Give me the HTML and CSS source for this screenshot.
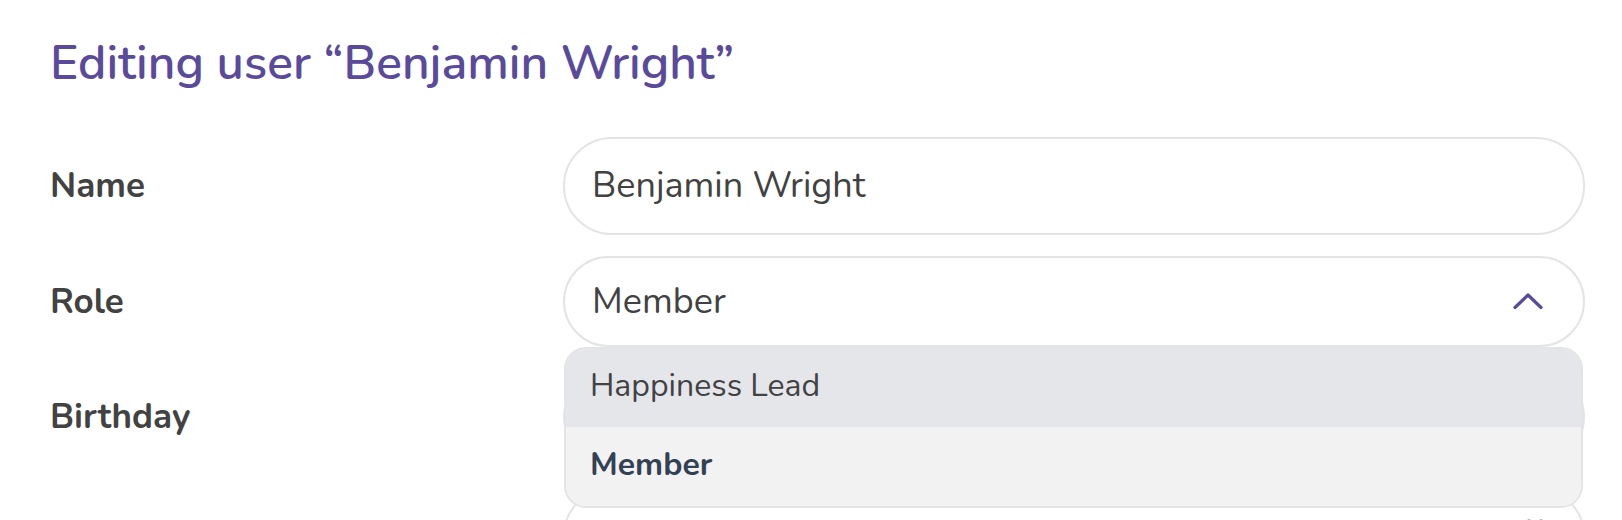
FILE: index.html
```html
<!DOCTYPE html>
<html lang="en">
<head>
<meta charset="utf-8">
<title>Editing user</title>
<link rel="stylesheet" href="styles.css">
</head>
<body>
<main class="page">
  <h1 class="title">Editing user “Benjamin Wright”</h1>
  <div class="form">
    <div class="row">
      <div class="label">Name</div>
      <div class="field">
        <div class="input">Benjamin Wright</div>
      </div>
    </div>
    <div class="row">
      <div class="label">Role</div>
      <div class="field">
        <div class="input select">
          <span>Member</span>
          <svg class="chevron" width="32" height="18" viewBox="0 0 32 18"><path d="M3 15.5 L16 3 L29 15.5" fill="none" stroke="#5a4a9c" stroke-width="3.2" stroke-linecap="round" stroke-linejoin="round"/></svg>
        </div>
        <ul class="menu">
          <li class="option option-hover">Happiness Lead</li>
          <li class="option option-selected">Member</li>
        </ul>
      </div>
    </div>
    <div class="row">
      <div class="label">Birthday</div>
      <div class="field">
        <div class="input"></div>
      </div>
    </div>
    <div class="row">
      <div class="label"></div>
      <div class="field">
        <div class="input">
          <svg class="icon-dots" width="24" height="10" viewBox="0 0 24 10"><circle cx="4" cy="5" r="2.6" fill="#555"/><circle cx="16" cy="5" r="2.6" fill="#555"/></svg>
        </div>
      </div>
    </div>
  </div>
</main>
</body>
</html>
```
FILE: styles.css
```css
html, body {
  margin: 0;
  padding: 0;
  background: #ffffff;
  height: 520px;
  overflow: hidden;
}

.page {
  padding: 35px 0 0 50px;
  font-family: Nunito, Lato, "Noto Sans", "Liberation Sans", sans-serif;
  color: #404040;
}

.title {
  margin: 0 0 44px 0;
  font-size: 48px;
  line-height: 1.2;
  font-weight: 600;
  color: #5a4a9c;
}

.form {
  display: flex;
  flex-direction: column;
  gap: 21px;
}

.row {
  display: grid;
  grid-template-columns: 513px 1022px;
  align-items: center;
}

.label {
  font-size: 35px;
  font-weight: 700;
  color: #424242;
}

.field {
  position: relative;
}

.input {
  position: relative;
  box-sizing: border-box;
  height: 98px;
  border: 2px solid #e4e4e4;
  border-radius: 49px;
  padding: 0 27px;
  display: flex;
  align-items: center;
  font-size: 36px;
  color: #424242;
  background: #fff;
}

.select {
  height: 91px;
  justify-content: space-between;
  padding-right: 39px;
}

.chevron {
  display: block;
}

.menu {
  position: absolute;
  top: 100%;
  left: 1px;
  right: 2px;
  margin: 0;
  padding: 0;
  list-style: none;
  border: 2px solid #e4e4e4;
  border-radius: 22px;
  overflow: hidden;
  z-index: 2;
  background: #f2f2f2;
}

.option {
  box-sizing: border-box;
  display: flex;
  align-items: center;
  padding: 0 24px 5px;
  font-size: 32px;
  color: #424242;
}

.option-hover {
  height: 78px;
  background: #e5e6ea;
}

.option-selected {
  height: 79px;
  padding-bottom: 3px;
  background: #f2f2f2;
  font-weight: 700;
  color: #334155;
}

.icon-dots {
  position: absolute;
  right: 34px;
  top: 28px;
}
```
